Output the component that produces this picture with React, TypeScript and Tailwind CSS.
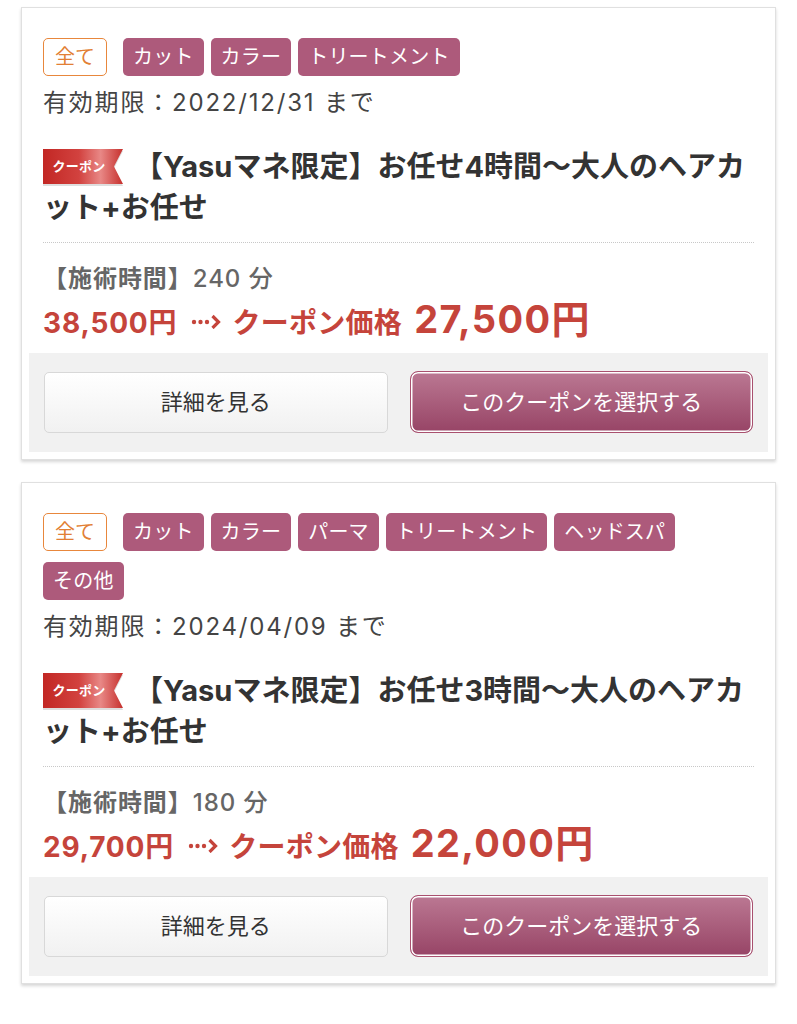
import React from "react";

type Coupon = {
  tags: string[];
  expiry: string;
  title: string;
  time: string;
  orig: string;
  price: string;
};

const coupons: Coupon[] = [
  {
    tags: ["カット", "カラー", "トリートメント"],
    expiry: "2022/12/31",
    title: "【Yasuマネ限定】お任せ4時間〜大人のヘアカット+お任せ",
    time: "240",
    orig: "38,500円",
    price: "27,500円",
  },
  {
    tags: ["カット", "カラー", "パーマ", "トリートメント", "ヘッドスパ", "その他"],
    expiry: "2024/04/09",
    title: "【Yasuマネ限定】お任せ3時間〜大人のヘアカット+お任せ",
    time: "180",
    orig: "29,700円",
    price: "22,000円",
  },
];

function Ribbon({ id }: { id: string }) {
  return (
    <span className="relative inline-flex items-center align-middle w-[80px] h-[35px] mr-[11px] -mt-[6px]">
      <svg
        className="absolute inset-0"
        width="80"
        height="37"
        viewBox="0 0 80 37"
      >
        <defs>
          <linearGradient id={id} x1="0" y1="0" x2="1" y2="0">
            <stop offset="0" stopColor="#c22724" />
            <stop offset="0.45" stopColor="#d2423f" />
            <stop offset="0.72" stopColor="#e88886" />
            <stop offset="1" stopColor="#c6302d" />
          </linearGradient>
        </defs>
        <polygon points="0,2 80,2 71,19.5 80,37 0,37" fill="#bdbdbd" opacity="0.5" />
        <polygon points="0,0 80,0 71,17.5 80,35 0,35" fill={`url(#${id})`} />
      </svg>
      <span className="relative w-[72px] text-center text-white text-[13px] font-bold leading-none tracking-[0.02em]">
        クーポン
      </span>
    </span>
  );
}

function Arrow() {
  return (
    <svg width="30" height="16" viewBox="0 0 30 16" className="ml-[14px] mr-[11px] self-center mt-[3px]">
      <circle cx="3" cy="9" r="2.2" fill="#c5443b" />
      <circle cx="9.5" cy="9" r="2.2" fill="#c5443b" />
      <circle cx="16" cy="9" r="2.2" fill="#c5443b" />
      <polyline
        points="21.5,3 27.5,9 21.5,15"
        fill="none"
        stroke="#c5443b"
        strokeWidth="3.2"
        strokeLinejoin="miter"
      />
    </svg>
  );
}

function CouponCard({ c, idx }: { c: Coupon; idx: number }) {
  return (
    <div className="bg-white border border-[#e0e0e0] shadow-[0_2px_3px_rgba(0,0,0,0.16)]">
      <div className="px-[21px] pt-[30px]">
        <div className="flex flex-wrap gap-x-[7px] gap-y-[11px]">
          <span className="mr-[9px] h-[38px] px-[11px] border border-[#e8873c] rounded-[5px] text-[#e27f35] text-[20px] leading-[36px]">
            全て
          </span>
          {c.tags.map((t) => (
            <span
              key={t}
              className="h-[38px] px-[10px] rounded-[5px] bg-[#ad5a7b] text-white text-[20px] leading-[38px] tracking-[0.01em]"
            >
              {t}
            </span>
          ))}
        </div>
        <div className="mt-[10px] text-[24px] leading-[34px] text-[#444] tracking-[0.075em]">
          有効期限：{c.expiry} まで
        </div>
        <div className="mt-[26px] text-[29px] leading-[41px] font-bold text-[#333]">
          <Ribbon id={`rg${idx}`} />
          {c.title}
        </div>
        <div className="mt-[14px] border-t border-dotted border-[#c8c8c8]" />
        <div className="mt-[19px] text-[24px] leading-[34px] text-[#666] tracking-[0.04em]">
          <span className="font-bold">【施術時間】</span>
          <span className="font-medium">{c.time} 分</span>
        </div>
        <div className="mt-[2px] flex items-baseline h-[42px] text-[#c5443b] font-bold">
          <span className="text-[28px] leading-[42px] tracking-[0.03em]">{c.orig}</span>
          <Arrow />
          <span className="text-[28px] leading-[42px] tracking-[0.01em]">クーポン価格</span>
          <span className="ml-[12px] text-[38px] leading-[42px] tracking-[0.035em]">{c.price}</span>
        </div>
      </div>
      <div className="mx-[7px] mb-[7px] mt-[13px] bg-[#f1f1f1] px-[15px] py-[19px] flex gap-[22px]">
        <button className="flex-1 h-[61px] rounded-[5px] border border-[#d8d8d8] bg-gradient-to-b from-white to-[#f1f1f1] text-[22px] text-[#333]">
          詳細を見る
        </button>
        <button className="flex-1 h-[62px] -my-[1px] rounded-[8px] border border-[#a9506f] shadow-[inset_0_0_0_1.5px_#ffffff] bg-gradient-to-b from-[#bb7893] to-[#974466] text-[22px] text-white">
          このクーポンを選択する
        </button>
      </div>
    </div>
  );
}

export default function App() {
  return (
    <div
      className="min-h-[1024px] bg-white px-[21px] pt-[7px] flex flex-col gap-[22px]"
      style={{ fontFamily: 'Inter, "Noto Sans CJK JP", sans-serif' }}
    >
      {coupons.map((c, i) => (
        <CouponCard key={i} c={c} idx={i} />
      ))}
    </div>
  );
}
